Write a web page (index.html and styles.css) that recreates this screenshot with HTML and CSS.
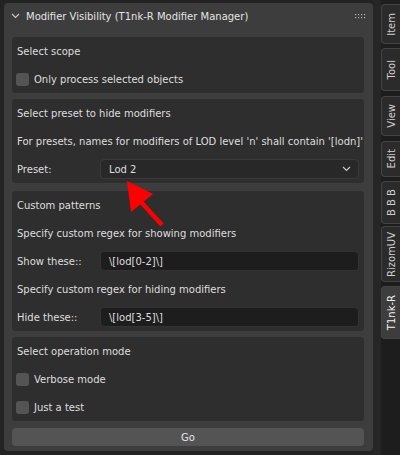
FILE: index.html
```html
<!DOCTYPE html>
<html>
<head>
<meta charset="utf-8">
<link rel="stylesheet" href="styles.css">
</head>
<body>
<div class="stage">
  <div class="panel">
    <div class="header">
      <svg class="chev" width="9" height="6" viewBox="0 0 9 6"><path d="M1 1 L4.5 4.5 L8 1" fill="none" stroke="#c8c8c8" stroke-width="1.2"/></svg>
      <span class="title">Modifier Visibility (T1nk-R Modifier Manager)</span>
      <svg class="grip" width="11" height="5" viewBox="0 0 11 5"><g fill="#b0b0b0"><rect x="0" y="0" width="1.2" height="1.2"/><rect x="3" y="0" width="1.2" height="1.2"/><rect x="6" y="0" width="1.2" height="1.2"/><rect x="9" y="0" width="1.2" height="1.2"/><rect x="0" y="3" width="1.2" height="1.2"/><rect x="3" y="3" width="1.2" height="1.2"/><rect x="6" y="3" width="1.2" height="1.2"/><rect x="9" y="3" width="1.2" height="1.2"/></g></svg>
    </div>
    <div class="content">
      <div class="box">
        <div class="row label">Select scope</div>
        <div class="row check"><span class="cb"></span><span>Only process selected objects</span></div>
      </div>
      <div class="box">
        <div class="row label">Select preset to hide modifiers</div>
        <div class="row label">For presets, names for modifiers of LOD level 'n' shall contain '[lodn]'</div>
        <div class="row field-row"><span class="flabel">Preset:</span>
          <div class="dropdown"><span>Lod 2</span>
            <svg width="9" height="6" viewBox="0 0 9 6"><path d="M1 1 L4.5 4.5 L8 1" fill="none" stroke="#c8c8c8" stroke-width="1.2"/></svg>
          </div>
        </div>
      </div>
      <div class="box box3">
        <div class="row label">Custom patterns</div>
        <div class="row label">Specify custom regex for showing modifiers</div>
        <div class="row field-row"><span class="flabel">Show these::</span><div class="textfield">\[lod[0-2]\]</div></div>
        <div class="row label">Specify custom regex for hiding modifiers</div>
        <div class="row field-row"><span class="flabel">Hide these::</span><div class="textfield">\[lod[3-5]\]</div></div>
      </div>
      <div class="box box4">
        <div class="row label">Select operation mode</div>
        <div class="row check"><span class="cb"></span><span>Verbose mode</span></div>
        <div class="row check"><span class="cb"></span><span>Just a test</span></div>
      </div>
      <div class="go">Go</div>
    </div>
  </div>
  <div class="gap"></div>
  <div class="tabs">
    <div class="tab t-item"><span>Item</span></div>
    <div class="tab t-tool"><span>Tool</span></div>
    <div class="tab t-view"><span>View</span></div>
    <div class="tab t-edit"><span>Edit</span></div>
    <div class="tab t-bbb"><span>B B B</span></div>
    <div class="tab t-rizom"><span>RizomUV</span></div>
    <div class="tab t-tink active"><span>T1nk-R</span></div>
  </div>
</div>
<svg class="arrow" width="400" height="455" viewBox="0 0 400 455">
  <line x1="162" y1="225" x2="141" y2="202" stroke="#ff0000" stroke-width="4.5" stroke-linecap="butt"/>
  <polygon points="127,181 153,194 131,212" fill="#ff0000"/>
</svg>
</body>
</html>
```
FILE: styles.css
```css
html, body {
  margin: 0;
  padding: 0;
}
body {
  width: 400px;
  height: 455px;
  overflow: hidden;
  background: #232323;
  font-family: "DejaVu Sans", sans-serif;
  font-size: 10px;
  color: #dedede;
  position: relative;
}
.stage {
  display: flex;
  align-items: flex-start;
  height: 455px;
}
.panel {
  margin: 3px 0 0 4px;
  width: 369px;
  background: #3d3d3d;
  border-radius: 4px;
  padding-bottom: 5px;
  flex: none;
}
.header {
  height: 26px;
  display: flex;
  align-items: center;
  padding: 0 7px 0 7px;
}
.chev {
  margin-right: 6px;
  flex: none;
}
.title {
  flex: 1;
  color: #e4e4e4;
}
.grip {
  flex: none;
}
.content {
  padding: 8px 9px 0 8px;
  display: flex;
  flex-direction: column;
  gap: 6px;
}
.box {
  background: #2e2e2e;
  border-radius: 4px;
  padding: 4px 5px 4px 4px;
  display: flex;
  flex-direction: column;
  gap: 8px;
}
.box3 { margin-top: 2px; }
.row {
  height: 20px;
  display: flex;
  align-items: center;
  white-space: nowrap;
}
.label {
  padding-left: 1px;
}
.check .cb {
  width: 13px;
  height: 13px;
  background: #545454;
  border-radius: 3px;
  margin-right: 5px;
  flex: none;
}
.field-row .flabel {
  width: 83px;
  padding-left: 1px;
  flex: none;
}
.dropdown {
  flex: 1;
  height: 20px;
  box-sizing: border-box;
  background: #282828;
  border: 1px solid #3a3a3a;
  border-radius: 4px;
  display: flex;
  align-items: center;
  justify-content: space-between;
  padding: 0 7px 0 8px;
}
.textfield {
  flex: 1;
  height: 20px;
  box-sizing: border-box;
  background: #1d1d1d;
  border: 1px solid #333333;
  border-radius: 4px;
  display: flex;
  align-items: center;
  padding: 0 8px;
}
.go {
  margin-top: 1px;
  height: 18px;
  background: #545454;
  border-radius: 4px;
  display: flex;
  align-items: center;
  justify-content: center;
  color: #e6e6e6;
}
.gap {
  width: 8px;
  height: 455px;
  background: #262626;
  flex: none;
}
.tabs {
  flex: 1;
  height: 455px;
  background: #1d1d1d;
  display: flex;
  flex-direction: column;
  padding-top: 4px;
}
.tab {
  box-sizing: border-box;
  width: 19px;
  margin-left: 0;
  background: #2b2b2b;
  border: 1px solid #444444;
  border-right: none;
  border-radius: 4px 0 0 4px;
  display: flex;
  align-items: center;
  justify-content: center;
  color: #cfcfcf;
}
.tab span {
  writing-mode: vertical-rl;
  transform: rotate(180deg);
  white-space: nowrap;
}
.t-item { height: 40px; }
.t-tool { height: 43px; margin-top: 4px; }
.t-view { height: 40px; margin-top: 5px; }
.t-edit { height: 36px; margin-top: 5px; }
.t-bbb { height: 43px; margin-top: 4px; }
.t-rizom { height: 56px; margin-top: 2px; }
.t-tink { height: 53px; margin-top: 4px; }
.tab.active {
  background: #3d3d3d;
  color: #f0f0f0;
}
.arrow {
  position: absolute;
  left: 0;
  top: 0;
  pointer-events: none;
}
```
